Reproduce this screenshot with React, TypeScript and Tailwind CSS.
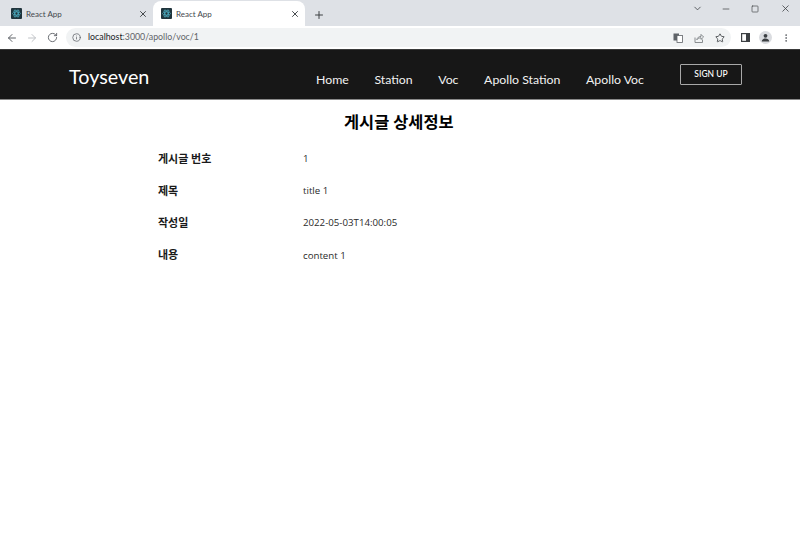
import React from "react";
import { ArrowLeft, ArrowRight, RotateCw, Info, X, Plus, ChevronDown, Minus, Square, Star, EllipsisVertical } from "lucide-react";

const ReactIcon = () => (
  <svg width="11" height="11" viewBox="0 0 11 11" className="shrink-0 rounded-[1px] bg-[#20343c]">
    <g fill="none" stroke="#4fb3c8" strokeWidth="0.7">
      <ellipse cx="5.5" cy="5.5" rx="4" ry="1.6" />
      <ellipse cx="5.5" cy="5.5" rx="4" ry="1.6" transform="rotate(60 5.5 5.5)" />
      <ellipse cx="5.5" cy="5.5" rx="4" ry="1.6" transform="rotate(120 5.5 5.5)" />
    </g>
  </svg>
);

const Tab = ({ active }: { active?: boolean }) => (
  <div className={`flex h-[25px] items-center pl-[8px] pr-[5px] ${active ? "w-[152px] rounded-t-[8px] bg-white" : "w-[150px]"}`}>
    <ReactIcon />
    <span className="ml-[4px] flex-1 text-[8px] leading-none text-[#45494d]">React App</span>
    <X size={10} strokeWidth={2.25} className="text-[#3c4043]" />
  </div>
);

const rows = [
  ["게시글 번호", "1"],
  ["제목", "title 1"],
  ["작성일", "2022-05-03T14:00:05"],
  ["내용", "content 1"],
];

const nav = ["Home", "Station", "Voc", "Apollo Station", "Apollo Voc"];

export default function App() {
  return (
    <div className="flex h-[560px] w-[800px] flex-col overflow-hidden bg-white font-['Lato','Noto_Sans_CJK_KR',sans-serif]">
      <div className="flex h-[26px] items-start bg-[#dee1e6] pl-[3px]">
        <div className="mt-[1px] flex">
          <Tab />
          <Tab active />
        </div>
        <Plus size={12} strokeWidth={2} className="ml-[8px] mt-[9px] text-[#3c4043]" />
        <div className="ml-auto flex items-center text-[#3f4246]">
          <ChevronDown size={11} strokeWidth={1.75} className="mr-[18px] mt-[3px]" />
          <Minus size={10} strokeWidth={1.75} className="mr-[20px] mt-[3px]" />
          <Square size={8} strokeWidth={2} className="mr-[21px] mt-[3px]" />
          <X size={11} strokeWidth={1.75} className="mr-[9px] mt-[3px]" />
        </div>
      </div>

      <div className="flex h-[23px] items-center bg-white pl-[6px]">
        <ArrowLeft size={12} strokeWidth={2} className="text-[#5f6368]" />
        <ArrowRight size={12} strokeWidth={2} className="ml-[8px] text-[#c0c3c7]" />
        <RotateCw size={11} strokeWidth={2} className="ml-[9px] text-[#5f6368]" />
        <div className="ml-[8px] flex h-[19px] w-[665px] shrink-0 items-center rounded-full bg-[#f1f3f4] pl-[6px]">
          <Info size={9} strokeWidth={2} className="text-[#5f6368]" />
          <span className="ml-[7px] text-[8.8px] leading-none text-[#5f6368]">
            <span className="text-[#202124]">localhost</span>:3000/apollo/voc/1
          </span>
          <div className="ml-auto flex items-center gap-[11px] pr-[6px] text-[#5f6368]">
            <svg width="10" height="10" viewBox="0 0 10 10">
              <rect x="0.5" y="0.5" width="5.5" height="7" fill="#5f6368" />
              <rect x="4" y="2.5" width="5.5" height="7" fill="#fff" stroke="#5f6368" strokeWidth="0.8" />
            </svg>
            <svg width="10" height="10" viewBox="0 0 10 10" fill="none" stroke="#7d8185" strokeWidth="0.9">
              <path d="M1 4.5V9.5H8.5V6.5" />
              <path d="M2.8 6.8C3.2 4.6 5 3.4 7 3.4V1.4L9.6 4L7 6.4V4.8C5.4 4.8 3.9 5.4 2.8 6.8Z" />
            </svg>
            <Star size={10} strokeWidth={2} className="text-[#3c4043]" />
          </div>
        </div>
        <svg width="9" height="9" viewBox="0 0 9 9" className="ml-[10px]">
          <rect x="0.6" y="0.6" width="7.8" height="7.8" fill="none" stroke="#3c4043" strokeWidth="1.2" />
          <rect x="5" y="0.6" width="3.4" height="7.8" fill="#3c4043" />
        </svg>
        <div className="ml-[9px] flex h-[13px] w-[13px] items-center justify-center rounded-full bg-[#dadce0]">
          <svg width="9" height="9" viewBox="0 0 9 9" fill="#3c4043">
            <circle cx="4.5" cy="2.8" r="1.9" />
            <path d="M0.8 8.5c0-2 1.8-3 3.7-3s3.7 1 3.7 3z" />
          </svg>
        </div>
        <EllipsisVertical size={10} strokeWidth={2} className="ml-[9px] text-[#5f6368]" />
      </div>

      <header className="flex h-[51px] items-start border-y border-t-[#3a3a3a] border-b-[#8a8a8a] bg-[#171717] pl-[69px]">
        <div className="mt-[12px] w-[81px] text-[19.8px] leading-[28px] text-white">Toyseven</div>
        <nav className="ml-[166px] mt-[22px] flex w-[328px] justify-between">
          {nav.map((n) => (
            <span key={n} className="text-[12.3px] leading-[16px] text-[#f2f2f2]">{n}</span>
          ))}
        </nav>
        <button className="ml-[36px] mt-[14px] flex h-[21px] w-[62px] items-center justify-center rounded-[1px] border border-[#a8a8a8] text-[8.5px] font-medium text-white">
          SIGN UP
        </button>
      </header>

      <main className="flex flex-1 flex-col pl-[158px]">
        <h1 className="ml-[186px] mt-[11px] text-[16.4px] font-bold leading-[22px] text-black">게시글 상세정보</h1>
        <div className="mt-[17px] flex flex-col gap-[16.3px]">
          {rows.map(([k, v]) => (
            <div key={k} className="flex h-[16px] items-center">
              <div className="w-[145px] text-[11px] font-semibold leading-none text-[#1a1a1a]">{k}</div>
              <div className="pt-[1px] font-['Open_Sans',sans-serif] text-[9.7px] leading-none text-[#2a2a2a]">{v}</div>
            </div>
          ))}
        </div>
      </main>
    </div>
  );
}
